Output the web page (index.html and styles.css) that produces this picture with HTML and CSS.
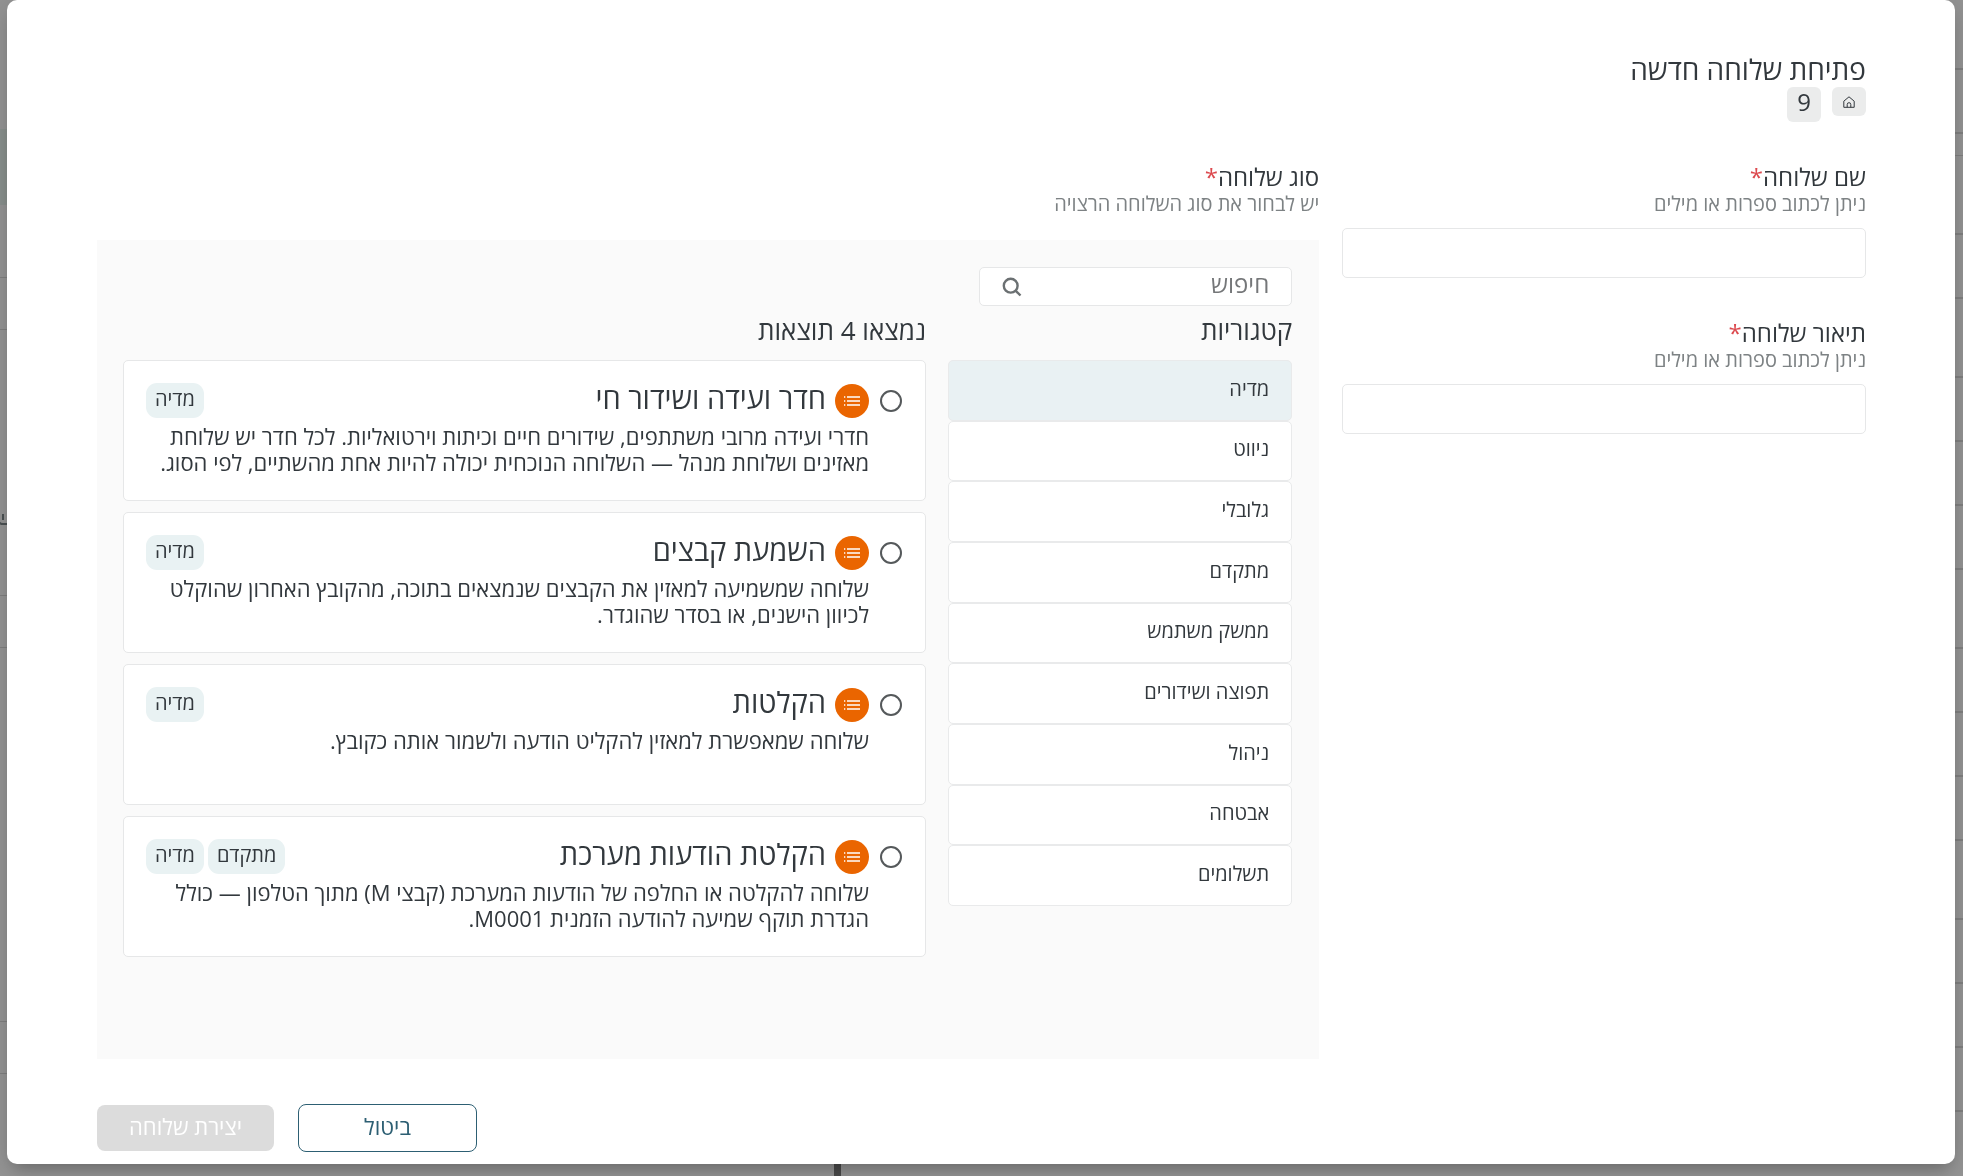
FILE: index.html
```html
<!DOCTYPE html>
<html lang="he" dir="rtl">
<head>
<meta charset="utf-8">
<meta name="viewport" content="width=device-width, initial-scale=1">
<title>פתיחת שלוחה חדשה</title>
<link rel="stylesheet" href="styles.css">
</head>
<body>
<svg class="sprite" aria-hidden="true">
  <symbol id="icon-list" viewBox="0 0 18 12">
    <path d="M4 2h13M4 6h13M4 10h13" fill="none" stroke="currentColor" stroke-width="1.5"/>
    <path d="M1 2h1.3M1 6h1.3M1 10h1.3" fill="none" stroke="currentColor" stroke-width="1.5"/>
  </symbol>
</svg>

<div class="page" aria-hidden="true">
  <div class="page-rows">
    <i class="row row-head"></i><i class="row"></i><i class="row row-thin"></i><i class="row row-tall"></i>
    <i class="row"></i><i class="row row-tall"></i><i class="row"></i><i class="row"></i><i class="row"></i>
    <i class="row row-tall"></i><i class="row"></i><i class="row"></i><i class="row"></i><i class="row row-tall"></i>
    <i class="row"></i><i class="row"></i><i class="row"></i>
  </div>
  <div class="page-foot"><i class="page-divider"></i></div>
  <div class="page-side">
    <i class="side-top"></i><i class="side-active"></i><i class="side-item"></i><i class="side-gap"></i>
    <i class="side-tools"><svg width="8" height="12" viewBox="0 0 8 12" fill="none" stroke="#4c5254" stroke-width="2"><path d="M4 0v6M0 8c1 2 2 2 4 2h4"/></svg></i>
    <i class="side-gap"></i><i class="side-long"></i><i class="side-gap"></i>
  </div>
</div>

<div class="overlay">
  <main class="modal" role="dialog" aria-labelledby="dialog-title">
    <header class="modal-head">
      <h1 id="dialog-title">פתיחת שלוחה חדשה</h1>
      <nav class="crumbs" aria-label="מיקום">
        <a class="crumb crumb-home" href="#" aria-label="ראשי">
          <svg width="12" height="12" viewBox="0 0 12 12" fill="none" stroke="currentColor" stroke-width="1"><path d="M.8 11.3V5.2L6 .8l5.200 4.400v6.100zM4.200 11.300V8.500a1.800 1.800 0 0 1 3.600 0v2.800"/></svg>
        </a>
        <a class="crumb" href="#">9</a>
      </nav>
    </header>

    <form class="form">
      <div class="fields">
        <div class="field">
          <label class="label" for="ext-name">שם שלוחה<span class="req">*</span></label>
          <p class="hint">ניתן לכתוב ספרות או מילים</p>
          <input class="input" id="ext-name" type="text">
        </div>
        <div class="field">
          <label class="label" for="ext-desc">תיאור שלוחה<span class="req">*</span></label>
          <p class="hint">ניתן לכתוב ספרות או מילים</p>
          <input class="input" id="ext-desc" type="text">
        </div>
      </div>

      <section class="types">
        <h2 class="label">סוג שלוחה<span class="req">*</span></h2>
        <p class="hint">יש לבחור את סוג השלוחה הרצויה</p>
        <div class="panel">
          <div class="search">
            <input type="search" placeholder="חיפוש" aria-label="חיפוש">
            <svg width="20" height="20" viewBox="0 0 20 20" fill="none" stroke="currentColor" stroke-width="2.400"><circle cx="8.700" cy="8.700" r="6.900"/><path d="M13.800 13.800l4.700 4.700"/></svg>
          </div>
          <div class="columns">
            <div class="categories">
              <h3>קטגוריות</h3>
              <div class="cat-list">
                <button class="cat cat-active" type="button">מדיה</button>
                <button class="cat" type="button">ניווט</button>
                <button class="cat" type="button">גלובלי</button>
                <button class="cat" type="button">מתקדם</button>
                <button class="cat" type="button">ממשק משתמש</button>
                <button class="cat" type="button">תפוצה ושידורים</button>
                <button class="cat" type="button">ניהול</button>
                <button class="cat" type="button">אבטחה</button>
                <button class="cat" type="button">תשלומים</button>
              </div>
            </div>
            <div class="results">
              <h3>נמצאו 4 תוצאות</h3>
              <div class="cards">
                <article class="card">
                  <div class="card-head">
                    <input type="radio" name="type" id="t1">
                    <span class="badge"><svg width="18" height="12"><use href="#icon-list"/></svg></span>
                    <label class="card-title" for="t1">חדר ועידה ושידור חי</label>
                    <span class="tag">מדיה</span>
                  </div>
                  <p class="card-text">חדרי ועידה מרובי משתתפים, שידורים חיים וכיתות וירטואליות. לכל חדר יש שלוחת מאזינים ושלוחת מנהל — השלוחה הנוכחית יכולה להיות אחת מהשתיים, לפי הסוג.</p>
                </article>
                <article class="card">
                  <div class="card-head">
                    <input type="radio" name="type" id="t2">
                    <span class="badge"><svg width="18" height="12"><use href="#icon-list"/></svg></span>
                    <label class="card-title" for="t2">השמעת קבצים</label>
                    <span class="tag">מדיה</span>
                  </div>
                  <p class="card-text">שלוחה שמשמיעה למאזין את הקבצים שנמצאים בתוכה, מהקובץ האחרון שהוקלט לכיוון הישנים, או בסדר שהוגדר.</p>
                </article>
                <article class="card">
                  <div class="card-head">
                    <input type="radio" name="type" id="t3">
                    <span class="badge"><svg width="18" height="12"><use href="#icon-list"/></svg></span>
                    <label class="card-title" for="t3">הקלטות</label>
                    <span class="tag">מדיה</span>
                  </div>
                  <p class="card-text">שלוחה שמאפשרת למאזין להקליט הודעה ולשמור אותה כקובץ.</p>
                </article>
                <article class="card">
                  <div class="card-head">
                    <input type="radio" name="type" id="t4">
                    <span class="badge"><svg width="18" height="12"><use href="#icon-list"/></svg></span>
                    <label class="card-title" for="t4">הקלטת הודעות מערכת</label>
                    <span class="tag">מתקדם</span>
                    <span class="tag">מדיה</span>
                  </div>
                  <p class="card-text">שלוחה להקלטה או החלפה של הודעות המערכת (קבצי M) מתוך הטלפון — כולל הגדרת תוקף שמיעה להודעה הזמנית M0001.</p>
                </article>
              </div>
            </div>
          </div>
        </div>
      </section>
    </form>

    <footer class="actions">
      <button class="btn btn-outline" type="button">ביטול</button>
      <button class="btn btn-primary" type="submit" disabled>יצירת שלוחה</button>
    </footer>
  </main>
</div>
</body>
</html>
```

FILE: styles.css
```css
* { box-sizing: border-box; }

body {
  margin: 0;
  background: #959595;
  color: #32383d;
  font-family: "Open Sans", "Liberation Sans", sans-serif;
  font-size: 22px;
}

h1, h2, h3, p { margin: 0; font-weight: 400; }
button, input { font: inherit; color: inherit; }
a { color: inherit; text-decoration: none; }
.sprite { position: absolute; width: 0; height: 0; }

/* Page behind the dialog */
.page {
  position: fixed;
  inset: 0;
  display: grid;
  grid-template-columns: 8px 1fr 7px;
  overflow: hidden;
}
.page i { display: block; }
.row { height: 64px; border-bottom: 2px solid #808080; }
.row-head { height: 70px; }
.row-thin { height: 22px; border-bottom-width: 1px; }
.row-tall { height: 79px; }
.page-foot {
  display: flex;
  align-items: flex-end;
  justify-content: flex-end;
  padding-left: 827px;
}
.page-divider { width: 7px; height: 12px; background: #4a4a4a; }
.side-top { height: 129px; }
.side-active { height: 76px; background: #8a918e; }
.side-item { height: 73px; border-bottom: 1px solid #808080; }
.side-gap { height: 52px; border-bottom: 1px solid #808080; }
.side-tools { height: 266px; padding-top: 184px; border-bottom: 1px solid #808080; }
.side-tools svg { display: block; }
.side-long { height: 374px; border-bottom: 1px solid #808080; }

/* Dialog */
.overlay {
  position: relative;
  display: flex;
  min-height: 100vh;
  padding: 0 8px 12px 7px;
}
.modal {
  flex: 1;
  display: flex;
  flex-direction: column;
  padding: 51px 89px 12px 90px;
  background: #fff;
  border-radius: 10px;
  box-shadow: 0 11px 15px -7px rgba(0, 0, 0, .2), 0 4px 30px 3px rgba(0, 0, 0, .14);
}
.modal-head h1 { font-size: 28px; font-weight: 500; line-height: 36px; }

.crumbs { display: flex; align-items: flex-start; gap: 11px; }
.crumb {
  display: grid;
  place-items: center;
  width: 34px;
  height: 35px;
  padding-bottom: 6px;
  background: #ebecec;
  border-radius: 6px;
  font-size: 24px;
  line-height: 28px;
}
.crumb-home { height: 29px; padding-bottom: 0; }

.form {
  flex: 1;
  display: grid;
  grid-template-columns: 3fr 7fr;
  gap: 23px;
  margin-top: 40px;
}
.fields { display: flex; flex-direction: column; gap: 40px; }
.label { display: block; font-size: 24px; font-weight: 500; line-height: 30px; }
.hint { color: #7d8284; font-size: 20px; line-height: 24px; }
.req { color: #dc4a4f; }
.input {
  display: block;
  width: 100%;
  height: 50px;
  margin-top: 12px;
  padding: 0 16px;
  border: 1px solid #e6e7e8;
  border-radius: 5px;
  background: #fff;
}

.types { display: flex; flex-direction: column; }
.panel {
  flex: 1;
  margin-top: 24px;
  padding: 27px 27px 27px 26px;
  background: #fafafa;
}
.search {
  display: flex;
  align-items: center;
  width: 313px;
  height: 39px;
  padding: 0 22px;
  border: 1px solid #e6e7e8;
  border-radius: 5px;
  background: #fff;
  color: #6b7072;
}
.search input {
  flex: 1;
  min-width: 0;
  padding: 0 0 6px;
  border: 0;
  background: none;
  font-size: 24px;
  line-height: 30px;
}
.search input::placeholder { color: #757779; opacity: 1; }

.columns {
  display: grid;
  grid-template-columns: 3fr 7fr;
  gap: 22px;
  margin-top: 6px;
}
.columns h3 { font-size: 26px; font-weight: 500; line-height: 36px; margin-bottom: 12px; }
.cat-list { display: grid; min-height: 546px; }
.cat {
  padding: 0 22px 3px;
  border: 1px solid #e9eaeb;
  border-radius: 5px;
  background: #fff;
  font-size: 20px;
  line-height: 24px;
  text-align: right;
}
.cat-active { background: #e9f1f3; }

.cards { display: grid; gap: 11px; }
.card {
  min-height: 141px;
  padding: 22px 23px 10px 22px;
  border: 1px solid #e6e7e8;
  border-radius: 5px;
  background: #fff;
}
.card-head { display: flex; align-items: center; height: 35px; }
.card-head input {
  appearance: none;
  width: 22px;
  height: 22px;
  margin: 0 0 0 11px;
  border: 2px solid #55595b;
  border-radius: 50%;
}
.badge {
  display: grid;
  place-items: center;
  width: 34px;
  height: 34px;
  border-radius: 50%;
  background: #ea6500;
  color: #fff;
}
.card-title { flex: 1; padding: 0 9px 6px; font-size: 29px; font-weight: 500; line-height: 29px; }
.tag {
  height: 35px;
  padding: 0 9px;
  margin-right: 4px;
  border-radius: 11px;
  background: #e9f2f3;
  font-size: 20px;
  line-height: 31px;
}
.card-text { padding: 5px 33px 0 0; line-height: 26px; }

.actions {
  display: flex;
  justify-content: flex-end;
  align-items: center;
  gap: 24px;
  margin-top: 45px;
}
.btn {
  width: 179px;
  height: 48px;
  padding: 0 0 4px;
  border: 1px solid #2d5f73;
  border-radius: 8px;
  background: #fff;
  color: #2d5f73;
}
.btn-primary {
  width: 177px;
  height: 46px;
  border: 0;
  background: #dcdcdc;
  color: #fff;
}
```
